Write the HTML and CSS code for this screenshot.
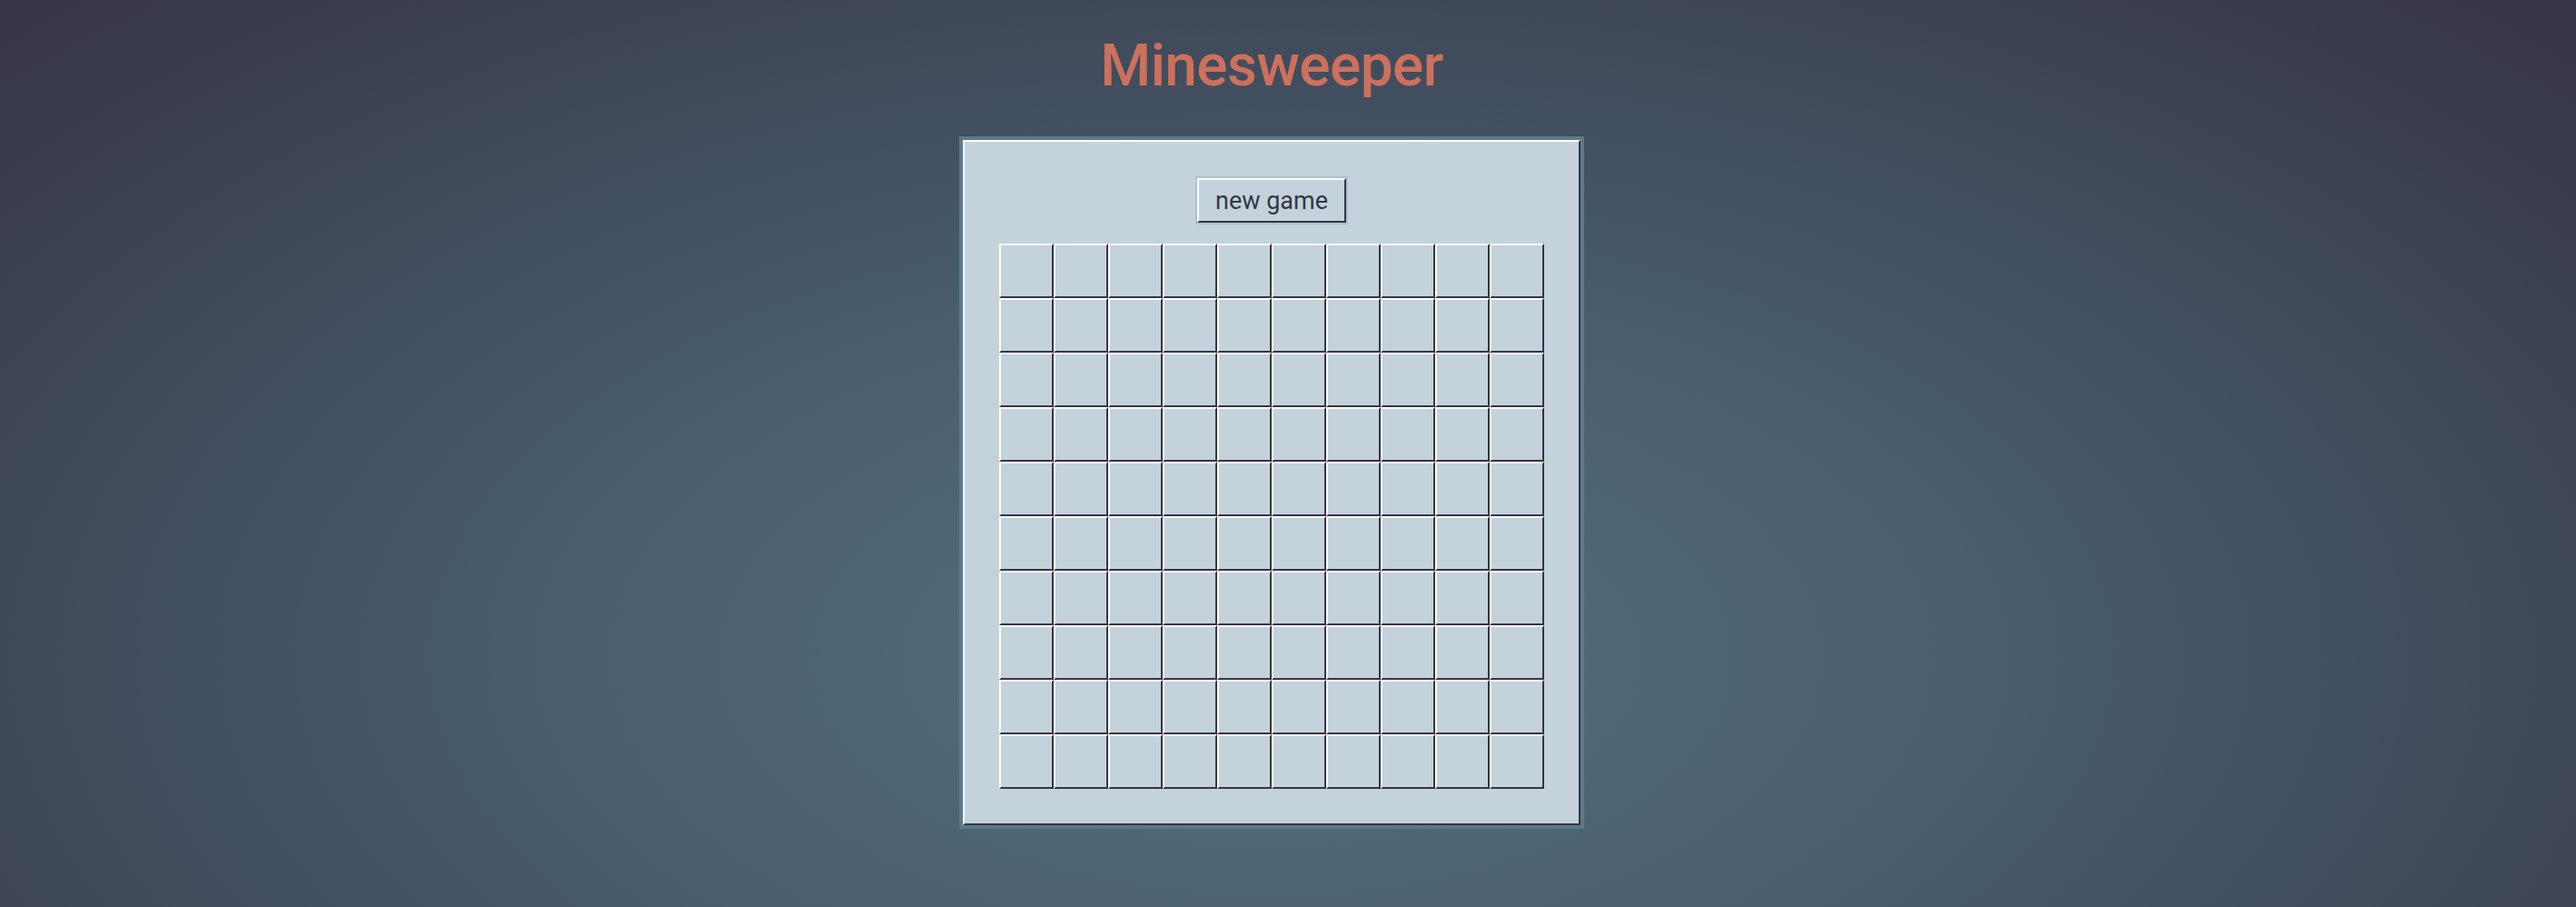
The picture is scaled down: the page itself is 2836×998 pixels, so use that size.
FILE: index.html
```html
<!DOCTYPE html>
<html lang="en">
<head>
<meta charset="utf-8">
<title>Minesweeper</title>
<link rel="stylesheet" href="styles.css">
</head>
<body>
<div class="page">
  <h1 class="title">Minesweeper</h1>
  <div class="panel">
    <div class="panel-inner">
      <button class="new-game" type="button">new game</button>
      <div class="board" id="board"></div>
    </div>
  </div>
</div>
<script src="script.js"></script>
</body>
</html>
```
FILE: styles.css
```css
html, body {
  margin: 0;
  padding: 0;
  height: 998px;
  overflow: hidden;
}
body {
  background-color: #363446;
  background-image: radial-gradient(ellipse 1980px 1022px at 1400px 723px, #57717f 0%, #485d6d 40%, #363446 100%);
  font-family: Roboto, "Liberation Sans", sans-serif;
}
.page {
  width: 2800px;
  display: flex;
  flex-direction: column;
  align-items: center;
  padding-top: 33px;
}
.title {
  margin: 0;
  font-size: 64px;
  line-height: 80px;
  font-weight: 500;
  letter-spacing: -0.6px;
  color: #cd705c;
}
.panel {
  margin-top: 37px;
  border: 4px solid #5b7a89;
}
.panel-inner {
  background: #c4d2db;
  border: 2px solid;
  border-color: #ffffff #363546 #363546 #ffffff;
  padding: 40px 38px 38px;
  display: flex;
  flex-direction: column;
  align-items: center;
}
.new-game {
  width: 164px;
  height: 49px;
  box-sizing: border-box;
  margin: 0;
  padding: 0;
  background: #c4d2db;
  border: 2px solid;
  border-color: #ffffff #363546 #363546 #ffffff;
  box-shadow: 0 0 0 2px #adc2ce;
  font-family: Roboto, "Liberation Sans", sans-serif;
  font-size: 27px;
  color: #363648;
  display: flex;
  align-items: center;
  justify-content: center;
}
.board {
  margin-top: 23px;
  display: grid;
  grid-template-columns: repeat(10, 60px);
  grid-auto-rows: 60px;
}
.cell {
  box-sizing: border-box;
  background: #c4d2db;
  border: 2px solid;
  border-color: #ffffff #363546 #363546 #ffffff;
}
```
FILE: script.js
```js
var board = document.getElementById('board');
for (var i = 0; i < 100; i++) {
  var c = document.createElement('div');
  c.className = 'cell';
  board.appendChild(c);
}
```
